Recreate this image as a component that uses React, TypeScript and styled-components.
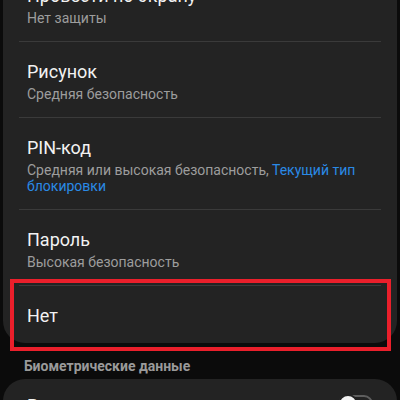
import React from "react";
import styled, { createGlobalStyle } from "styled-components";

const Global = createGlobalStyle`
  html, body { margin: 0; padding: 0; background: #0b0b0b; }
  body { width: 400px; height: 400px; overflow: hidden; font-family: Roboto, "Noto Sans", sans-serif; }
`;

const Page = styled.div`
  width: 400px;
  height: 400px;
  overflow: hidden;
  background: #0b0b0b;
`;

const Scroller = styled.div`
  margin-top: -34px;
  display: flex;
  flex-direction: column;
`;

const Card = styled.div`
  margin: 0 3px;
  background: #232323;
  border-radius: 22px;
  display: flex;
  flex-direction: column;
`;

const Row = styled.div<{ $last?: boolean }>`
  position: relative;
  padding: 19px 24px ${(p) => (p.$last ? "16px" : "15px")};
  display: flex;
  align-items: center;
  gap: 16px;
`;

const Divider = styled.div`
  height: 1px;
  margin: 0 16px;
  background: #3a3a3a;
`;

const TextCol = styled.div`
  flex: 1;
  display: flex;
  flex-direction: column;
  gap: 3px;
`;

const Title = styled.div`
  color: #f2f2f2;
  font-size: 18px;
  line-height: 22px;
`;

const Sub = styled.div`
  color: #9d9d9d;
  font-size: 14px;
  line-height: 16px;
`;

const Link = styled.span`
  color: #2a8ae6;
`;

const Highlight = styled.div`
  position: absolute;
  left: 7px;
  right: 6px;
  top: -7px;
  bottom: -8px;
  border: 4px solid #ea1f2b;
  pointer-events: none;
`;

const SectionHeader = styled.div`
  padding: 14px 24px 4px;
  color: #9a9a9a;
  font-size: 14px;
  font-weight: 700;
  line-height: 18px;
`;

const BioRow = styled(Row)`
  padding-top: 16px;
`;

const Toggle = styled.div`
  position: relative;
  width: 31px;
  height: 14px;
  border: 2px solid #5e5e5e;
  border-radius: 10px;
  flex: none;
  margin-top: -4px;
`;

const Knob = styled.div`
  position: absolute;
  left: -2px;
  top: -3px;
  width: 16px;
  height: 16px;
  border-radius: 50%;
  background: #f4f4f4;
  border: 2px solid #232323;
`;

export default function App() {
  return (
    <Page>
      <Global />
      <Scroller>
        <Card>
          <Row>
            <TextCol>
              <Title>Провести по экрану</Title>
              <Sub>Нет защиты</Sub>
            </TextCol>
          </Row>
          <Divider />
          <Row>
            <TextCol>
              <Title>Рисунок</Title>
              <Sub>Средняя безопасность</Sub>
            </TextCol>
          </Row>
          <Divider />
          <Row>
            <TextCol>
              <Title>PIN-код</Title>
              <Sub>
                Средняя или высокая безопасность, <Link>Текущий тип блокировки</Link>
              </Sub>
            </TextCol>
          </Row>
          <Divider />
          <Row>
            <TextCol>
              <Title>Пароль</Title>
              <Sub>Высокая безопасность</Sub>
            </TextCol>
          </Row>
          <Divider />
          <Row $last>
            <TextCol>
              <Title>Нет</Title>
            </TextCol>
            <Highlight />
          </Row>
        </Card>
        <SectionHeader>Биометрические данные</SectionHeader>
        <Card>
          <BioRow>
            <TextCol>
              <Title>Распознавание лица</Title>
            </TextCol>
            <Toggle>
              <Knob />
            </Toggle>
          </BioRow>
        </Card>
      </Scroller>
    </Page>
  );
}
